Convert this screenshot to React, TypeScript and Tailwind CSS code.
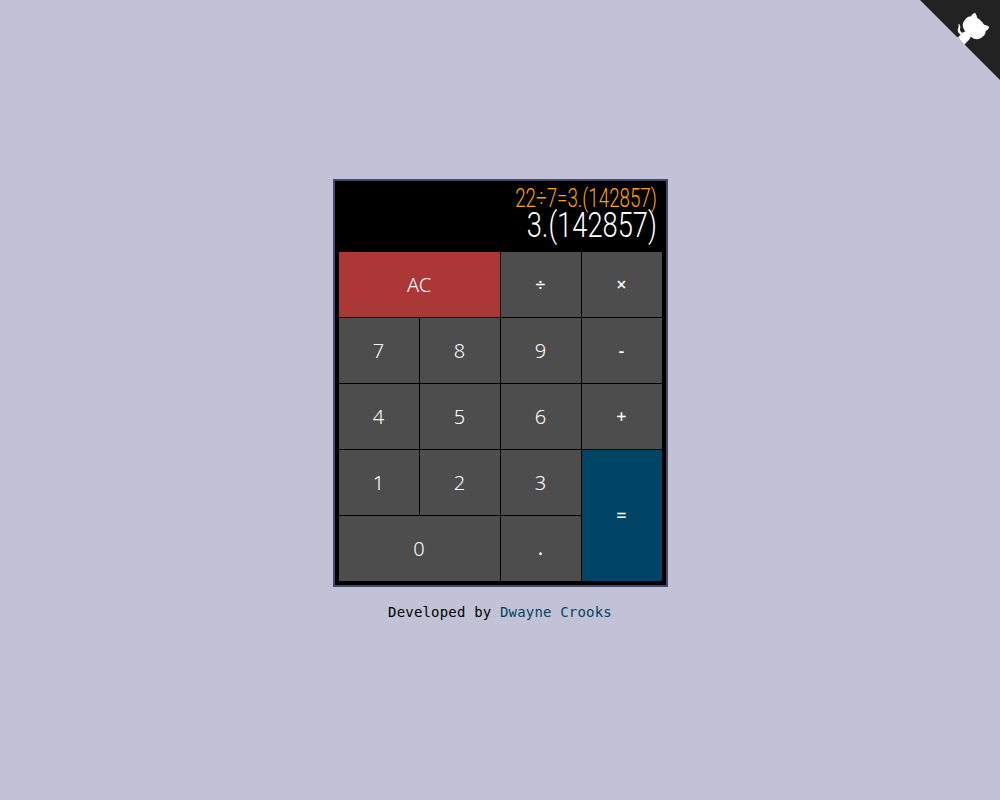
const Key = ({
  label,
  className,
  small,
}: {
  label: string;
  className?: string;
  small?: boolean;
}) => (
  <button
    className={`flex items-center justify-center border-r border-b border-black text-white ${
      small ? "text-[18px] font-medium" : "text-[20px] font-light"
    } ${className ?? "bg-[#4d4d4d]"}`}
  >
    {label}
  </button>
);

const GithubCorner = () => (
  <svg
    className="absolute top-0 right-0"
    width="80"
    height="80"
    viewBox="0 0 250 250"
    aria-hidden="true"
  >
    <path fill="#222222" d="M0 0 L250 250 L250 0 Z" />
    <path
      fill="#ffffff"
      d="M128.3,109.0 C113.8,99.7 119.0,89.6 119.0,89.6 C122.0,82.7 120.5,78.6 120.5,78.6 C119.2,72.0 123.4,76.3 123.4,76.3 C127.3,80.9 125.5,87.3 125.5,87.3 C122.9,97.6 130.6,101.9 134.4,103.2"
    />
    <path
      fill="#ffffff"
      d="M115.0,115.0 C114.9,115.1 118.7,116.5 119.8,115.4 L133.7,101.6 C136.9,99.2 139.9,98.4 142.2,98.6 C133.8,88.0 127.5,74.4 143.8,58.0 C148.5,53.4 154.0,51.2 159.7,51.0 C160.3,49.4 163.2,43.6 171.4,40.1 C171.4,40.1 176.1,42.5 178.8,56.2 C183.1,58.6 187.2,61.8 190.9,65.4 C194.5,69.0 197.7,73.2 200.1,77.6 C213.8,80.2 216.3,84.9 216.3,84.9 C212.7,93.1 206.9,96.0 205.4,96.6 C205.1,102.4 203.0,107.8 198.3,112.5 C181.9,128.9 168.3,122.5 157.7,114.1 C157.9,116.9 156.7,120.9 152.7,124.9 L141.0,136.5 C139.8,137.7 141.6,141.9 141.8,141.8 Z"
    />
  </svg>
);

export default function App() {
  return (
    <div className="relative flex min-h-screen flex-col items-center bg-[#c2c2d6] pt-[179px] font-['Noto_Sans',sans-serif]">
      <GithubCorner />
      <div className="w-[335px] border-2 border-[#47476b] bg-black">
        <div className="flex h-[71px] flex-col items-end pt-[7px] pr-[9px] font-['Roboto',sans-serif] font-light">
          <div className="origin-right scale-x-[0.75] text-[25px] leading-[22px] text-[#ffa500]">
            22÷7=3.(142857)
          </div>
          <div className="origin-right scale-x-[0.78] text-[35px] leading-[32px] text-white">
            3.(142857)
          </div>
        </div>
        <div className="mb-[3px] ml-[4px] grid w-[324px] grid-cols-[81px_81px_81px_81px] grid-rows-[66px_66px_66px_66px_66px]">
          <Key label="AC" className="col-span-2 bg-[#ab3737]" />
          <Key label="÷" small />
          <Key label="×" small />
          <Key label="7" />
          <Key label="8" />
          <Key label="9" />
          <Key label="-" small />
          <Key label="4" />
          <Key label="5" />
          <Key label="6" />
          <Key label="+" small />
          <Key label="1" />
          <Key label="2" />
          <Key label="3" />
          <Key label="=" small className="row-span-2 bg-[#004466]" />
          <Key label="0" className="col-span-2 bg-[#4d4d4d]" />
          <Key label="." small />
        </div>
      </div>
      <p className="mt-[15px] font-['DejaVu_Sans_Mono',monospace] text-[14px] leading-[20px] tracking-[0.18px] text-black">
        Developed by <a className="text-[#004466]">Dwayne Crooks</a>
      </p>
    </div>
  );
}
